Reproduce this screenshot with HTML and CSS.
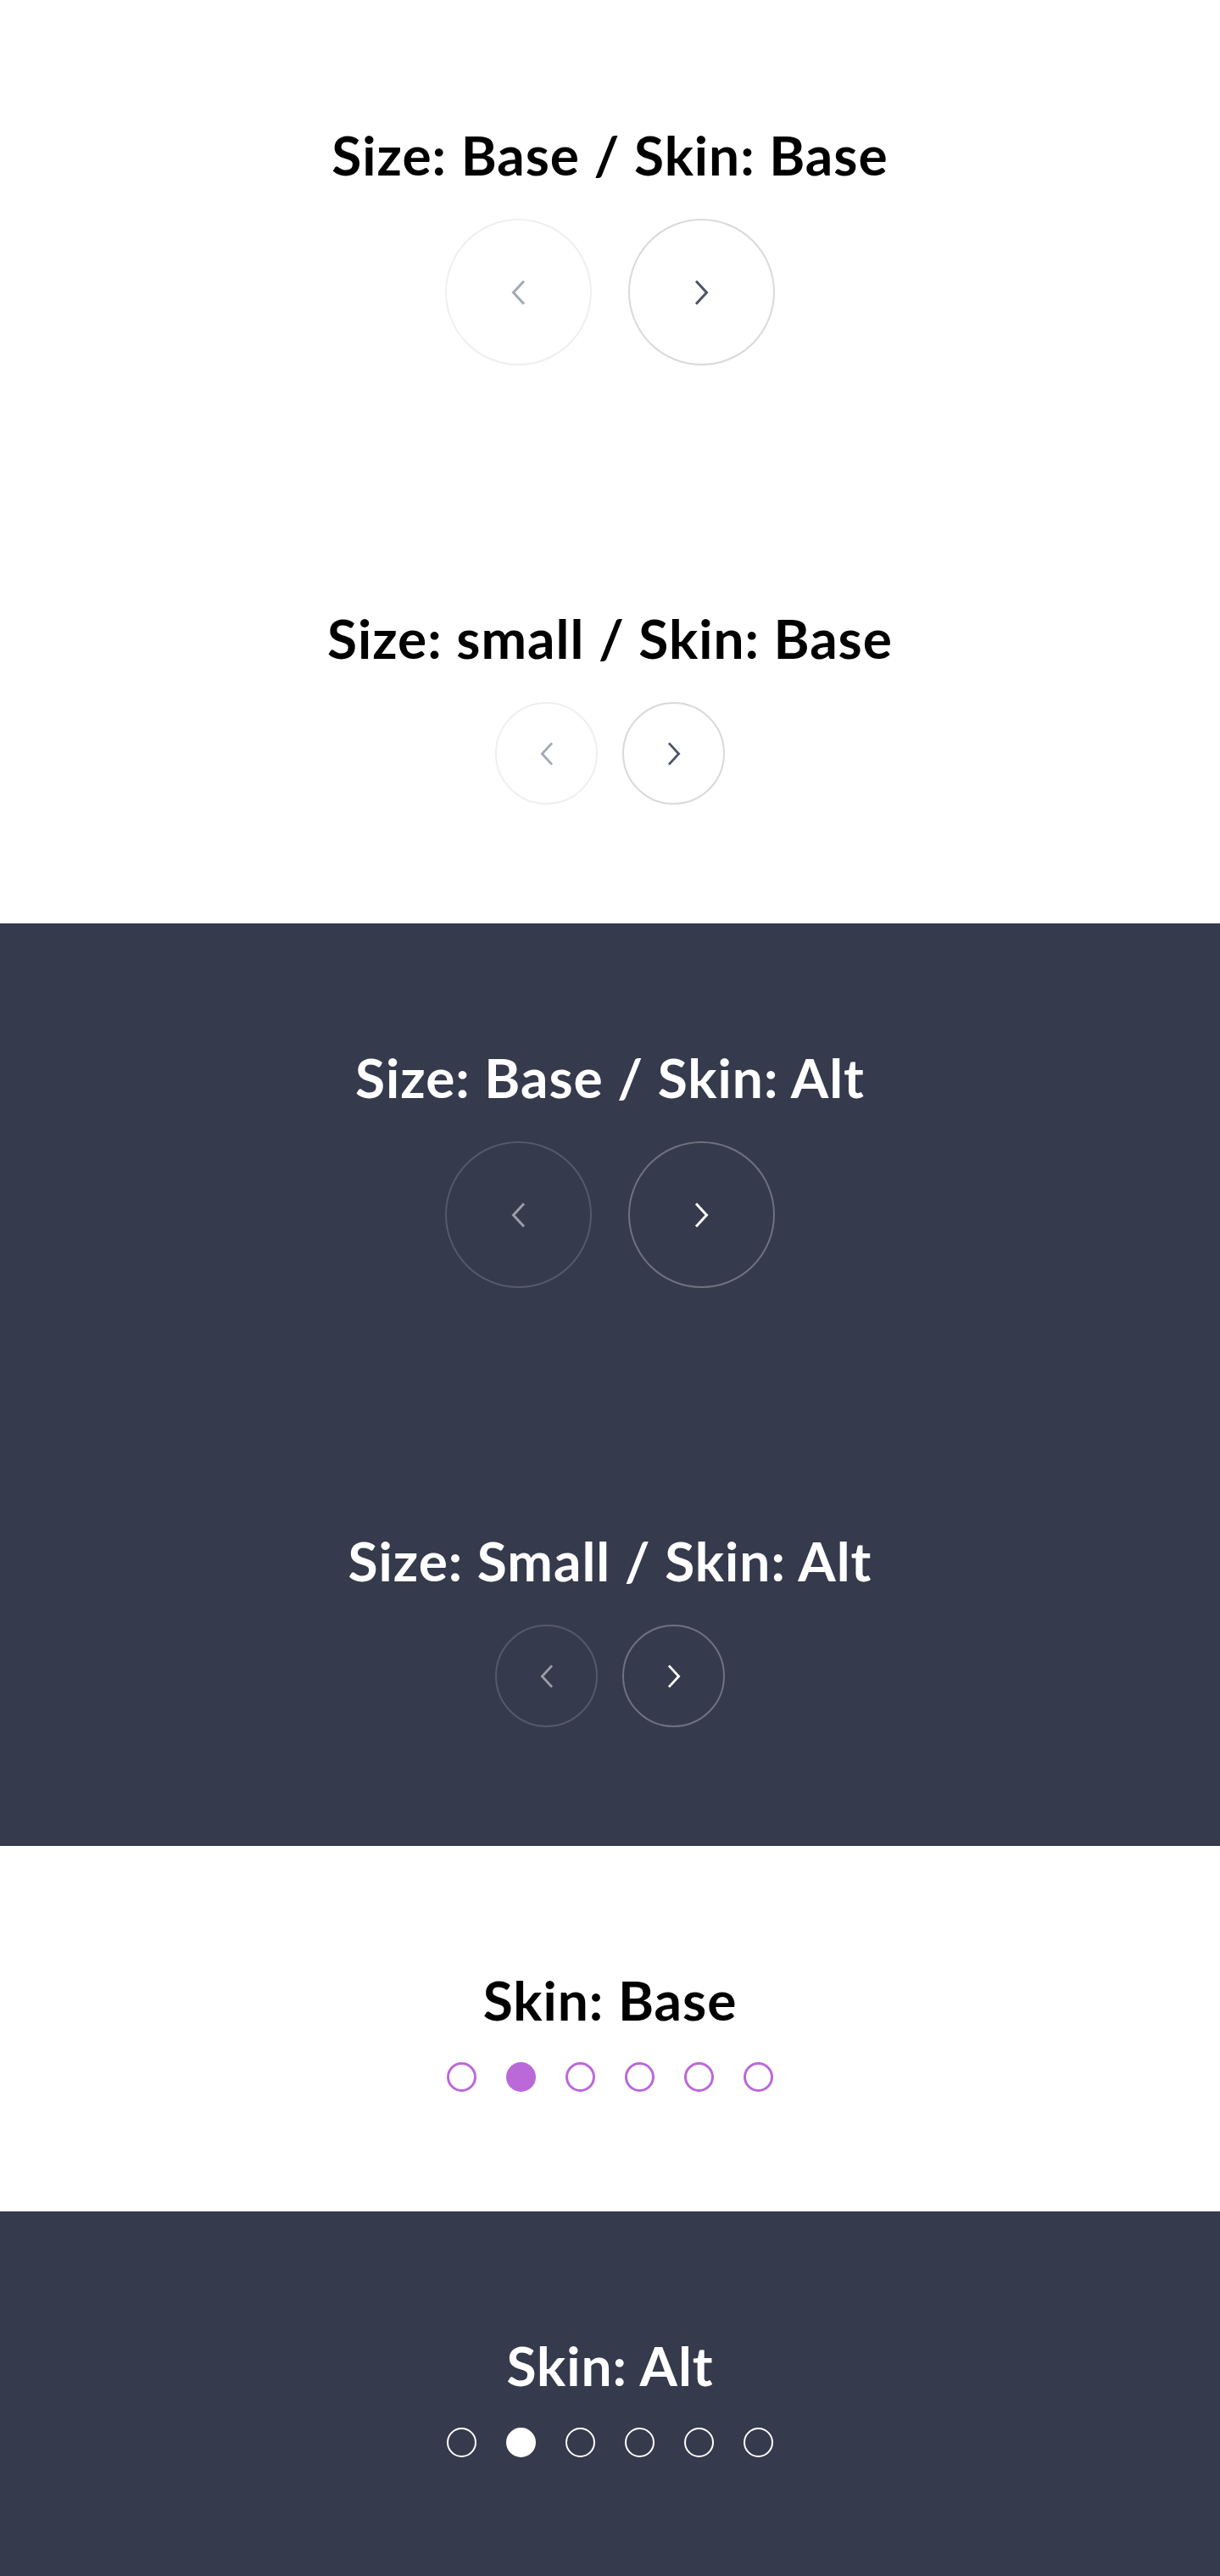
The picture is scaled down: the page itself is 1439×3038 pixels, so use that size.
FILE: index.html
```html
<!DOCTYPE html>
<html lang="en">
<head>
<meta charset="utf-8">
<title>Carousel controls</title>
<link rel="stylesheet" href="styles.css">
</head>
<body>
<section class="panel panel-light panel-first">
  <div class="block">
    <h2 class="title">Size: Base / Skin: Base</h2>
    <div class="arrows arrows-base">
      <button class="arrow arrow-prev" aria-label="Previous"><svg class="chev" viewBox="0 0 17 30"><path d="M15 1.5 L2.5 15 L15 28.5"/></svg></button>
      <button class="arrow arrow-next" aria-label="Next"><svg class="chev" viewBox="0 0 17 30"><path d="M2 1.5 L14.5 15 L2 28.5"/></svg></button>
    </div>
  </div>
  <div class="block">
    <h2 class="title">Size: small / Skin: Base</h2>
    <div class="arrows arrows-small">
      <button class="arrow arrow-prev" aria-label="Previous"><svg class="chev" viewBox="0 0 17 30"><path d="M15 1.5 L2.5 15 L15 28.5"/></svg></button>
      <button class="arrow arrow-next" aria-label="Next"><svg class="chev" viewBox="0 0 17 30"><path d="M2 1.5 L14.5 15 L2 28.5"/></svg></button>
    </div>
  </div>
</section>
<section class="panel panel-dark">
  <div class="block">
    <h2 class="title">Size: Base / Skin: Alt</h2>
    <div class="arrows arrows-base">
      <button class="arrow arrow-prev" aria-label="Previous"><svg class="chev" viewBox="0 0 17 30"><path d="M15 1.5 L2.5 15 L15 28.5"/></svg></button>
      <button class="arrow arrow-next" aria-label="Next"><svg class="chev" viewBox="0 0 17 30"><path d="M2 1.5 L14.5 15 L2 28.5"/></svg></button>
    </div>
  </div>
  <div class="block">
    <h2 class="title">Size: Small / Skin: Alt</h2>
    <div class="arrows arrows-small">
      <button class="arrow arrow-prev" aria-label="Previous"><svg class="chev" viewBox="0 0 17 30"><path d="M15 1.5 L2.5 15 L15 28.5"/></svg></button>
      <button class="arrow arrow-next" aria-label="Next"><svg class="chev" viewBox="0 0 17 30"><path d="M2 1.5 L14.5 15 L2 28.5"/></svg></button>
    </div>
  </div>
</section>
<section class="panel panel-light">
  <div class="block block-dots">
    <h2 class="title">Skin: Base</h2>
    <div class="dots">
      <span class="dot"></span><span class="dot dot-active"></span><span class="dot"></span><span class="dot"></span><span class="dot"></span><span class="dot"></span>
    </div>
  </div>
</section>
<section class="panel panel-dark">
  <div class="block block-dots">
    <h2 class="title">Skin: Alt</h2>
    <div class="dots">
      <span class="dot"></span><span class="dot dot-active"></span><span class="dot"></span><span class="dot"></span><span class="dot"></span><span class="dot"></span>
    </div>
  </div>
</section>
</body>
</html>
```
FILE: styles.css
```css
* { box-sizing: border-box; }
html, body { margin: 0; padding: 0; }
body {
  font-family: Lato, "Noto Sans", sans-serif;
  background: #fff;
}
.panel { display: flex; flex-direction: column; }
.panel-light { background: #fff; color: #000; }
.panel-dark { background: #353a4c; color: #fff; }
.panel-first { padding-top: 1px; }
.block {
  display: flex;
  flex-direction: column;
  align-items: center;
  padding: 143px 0 140px;
}
.block-dots { padding-bottom: 141px; }
.title {
  margin: 0 0 37px;
  font-size: 64px;
  line-height: 77px;
  font-weight: 700;
  letter-spacing: 1px;
  text-align: center;
}
.arrows { display: flex; justify-content: center; }
.arrows-base { gap: 43px; }
.arrows-small { gap: 29px; }
.arrow {
  display: flex;
  align-items: center;
  justify-content: center;
  padding: 0;
  margin: 0;
  border-radius: 50%;
  border: 2px solid #eee;
  background: transparent;
}
.arrows-base .arrow { width: 173px; height: 173px; }
.arrows-small .arrow { width: 121px; height: 121px; }
.chev {
  width: 17px;
  height: 30px;
  fill: none;
  stroke-width: 3;
  stroke-linecap: butt;
  stroke-linejoin: miter;
}
.arrows-small .chev { width: 16px; height: 28px; }
.panel-light .arrow-prev { border-color: #efefef; }
.panel-light .arrow-next { border-color: #d9d9d9; }
.panel-light .arrow-prev .chev { stroke: #a2a9b4; }
.panel-light .arrow-next .chev { stroke: #4b5467; }
.panel-dark .arrow-prev { border-color: #555a6a; }
.panel-dark .arrow-next { border-color: #6e7280; }
.panel-dark .arrow-prev .chev { stroke: #9a9ea8; }
.panel-dark .arrow-next .chev { stroke: #fff; }
.dots { display: flex; gap: 35px; margin-top: -2px; }
.dot {
  width: 35px;
  height: 35px;
  border-radius: 50%;
  border: 3px solid #bb68d9;
}
.panel-light .dot-active { background: #bb68d9; }
.panel-dark .dot { border-color: #fff; border-width: 2.5px; }
.panel-dark .dot-active { background: #fff; }
```
